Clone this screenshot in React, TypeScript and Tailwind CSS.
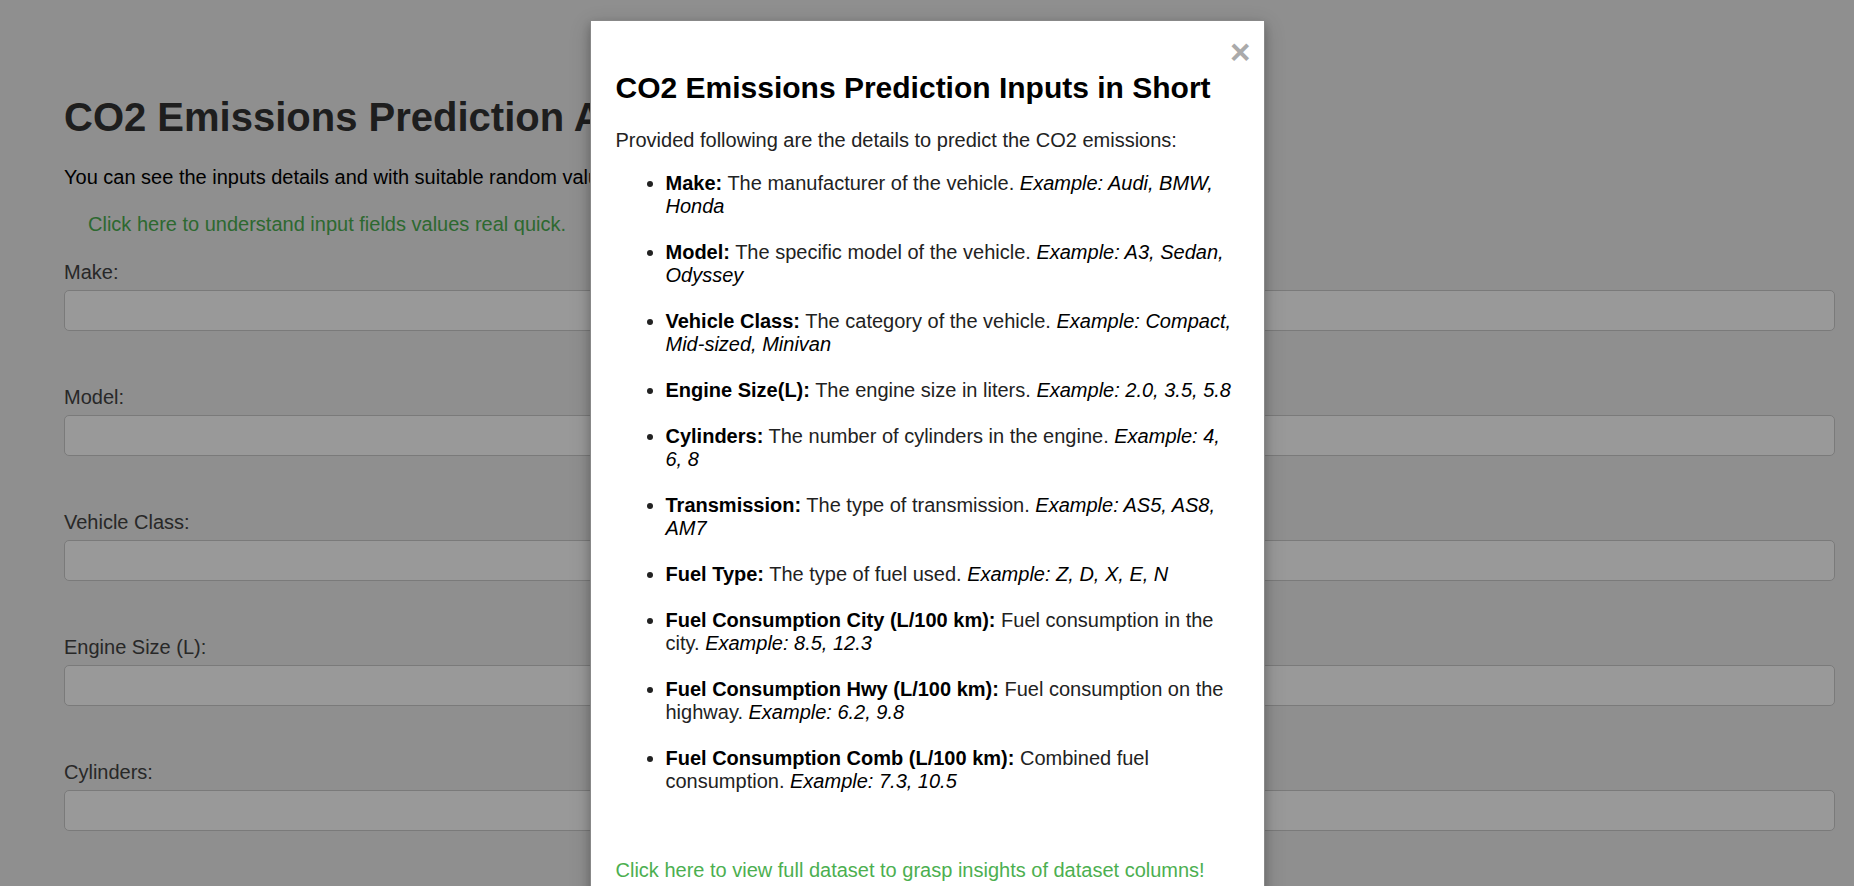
import React from 'react';

// --- Data ---

interface InputField {
    id: string;
    label: string;
}

interface InputDetail {
    name: string;
    description: string;
    example: string;
}

const fields: InputField[] = [
    { id: 'make', label: 'Make:' },
    { id: 'model', label: 'Model:' },
    { id: 'vehicleClass', label: 'Vehicle Class:' },
    { id: 'engineSize', label: 'Engine Size (L):' },
    { id: 'cylinders', label: 'Cylinders:' },
];

const details: InputDetail[] = [
    { name: 'Make:', description: 'The manufacturer of the vehicle.', example: 'Example: Audi, BMW, Honda' },
    { name: 'Model:', description: 'The specific model of the vehicle.', example: 'Example: A3, Sedan, Odyssey' },
    { name: 'Vehicle Class:', description: 'The category of the vehicle.', example: 'Example: Compact, Mid-sized, Minivan' },
    { name: 'Engine Size(L):', description: 'The engine size in liters.', example: 'Example: 2.0, 3.5, 5.8' },
    { name: 'Cylinders:', description: 'The number of cylinders in the engine.', example: 'Example: 4, 6, 8' },
    { name: 'Transmission:', description: 'The type of transmission.', example: 'Example: AS5, AS8, AM7' },
    { name: 'Fuel Type:', description: 'The type of fuel used.', example: 'Example: Z, D, X, E, N' },
    { name: 'Fuel Consumption City (L/100 km):', description: 'Fuel consumption in the city.', example: 'Example: 8.5, 12.3' },
    { name: 'Fuel Consumption Hwy (L/100 km):', description: 'Fuel consumption on the highway.', example: 'Example: 6.2, 9.8' },
    { name: 'Fuel Consumption Comb (L/100 km):', description: 'Combined fuel consumption.', example: 'Example: 7.3, 10.5' },
];

// --- Page behind the modal ---

const FormField = ({ field }: { field: InputField }) => (
    <div>
        <label htmlFor={field.id} className="block text-[20px] leading-[23px] text-[#444]">
            {field.label}
        </label>
        <input
            id={field.id}
            type="text"
            className="mt-[6px] block h-[41px] w-full rounded-[5px] border border-[#cccccc] bg-white"
        />
    </div>
);

const PredictionForm = () => (
    <div className="pl-[64px] pr-[19px] pt-[94px]">
        <h1 className="text-[40px] leading-[46px] font-bold text-[#333]">CO2 Emissions Prediction App</h1>
        <p className="mt-[26px] text-[20px] leading-[23px] text-black">
            You can see the inputs details and with suitable random values predict the CO2 emissions.
        </p>
        <a href="#" className="mt-[24px] ml-[24px] inline-block text-[20px] leading-[23px] text-[#4CAF50]">
            Click here to understand input fields values real quick.
        </a>
        <div className="mt-[23px] flex flex-col gap-[55px]">
            {fields.map((f) => (
                <FormField key={f.id} field={f} />
            ))}
        </div>
    </div>
);

// --- Modal ---

const InputsModal = () => (
    <div className="absolute inset-0 bg-black/40">
        <div className="relative mx-auto mt-[20px] w-[675px] border border-[#888888] bg-white px-[25px] pt-[25px] pb-[25px] shadow-[0_4px_8px_0_rgba(0,0,0,0.2),0_6px_20px_0_rgba(0,0,0,0.19)]">
            <span className="absolute right-[13px] top-[13px] cursor-pointer text-[35px] leading-[35px] font-bold text-[#aaaaaa]">
                ×
            </span>
            <h2 className="mt-[25px] text-[30px] leading-[34px] font-bold text-black">
                CO2 Emissions Prediction Inputs in Short
            </h2>
            <p className="mt-[24px] text-[20px] leading-[23px] text-[#222]">
                Provided following are the details to predict the CO2 emissions:
            </p>
            <ul className="mt-[20px] list-disc pl-[50px] text-[20px] leading-[23px] text-[#222]">
                {details.map((d) => (
                    <li key={d.name} className="mb-[23px] last:mb-0">
                        <strong className="font-bold text-black">{d.name}</strong> {d.description}{' '}
                        <em className="italic text-black">{d.example}</em>
                    </li>
                ))}
            </ul>
            <a href="#" className="mt-[66px] block text-[20px] leading-[23px] text-[#4CAF50]">
                Click here to view full dataset to grasp insights of dataset columns!
            </a>
        </div>
    </div>
);

export default function App() {
    return (
        <div className="relative h-screen overflow-hidden bg-[#eeeeee] font-['Liberation_Sans',Arial,sans-serif]">
            <PredictionForm />
            <InputsModal />
        </div>
    );
}
